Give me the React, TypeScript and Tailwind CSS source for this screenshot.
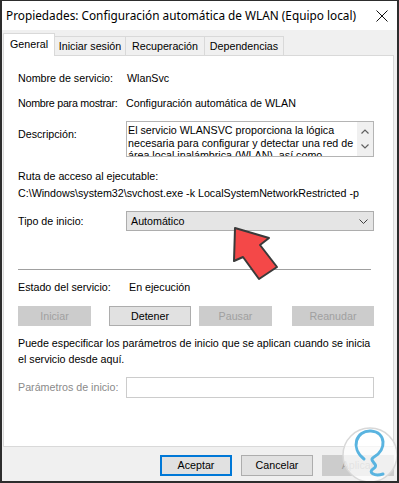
import React from "react";

function DisabledBtn({ label, w }: { label: string; w: string }) {
  return (
    <div className={`${w} h-[20px] bg-[#cccccc] border border-[#cccccc] text-[#a0a0a0] flex items-center justify-center`}>
      {label}
    </div>
  );
}

export default function App() {
  return (
    <div className="relative w-[399px] h-[483px] overflow-hidden border-x-2 border-b-2 border-t border-[#2d2d2d] bg-[#f0f0f0] font-['Liberation_Sans',Arial,sans-serif] text-[10.7px] text-black flex flex-col">
      {/* Title bar */}
      <div className="h-[29px] shrink-0 bg-white flex items-center justify-between pl-[4px] pr-[9px]">
        <span className="font-['Noto_Sans',sans-serif] text-[11.8px] leading-none text-black">
          Propiedades: Configuración automática de WLAN (Equipo local)
        </span>
        <svg width="12" height="12" viewBox="0 0 12 12">
          <path d="M0.5 0.5 L11.5 11.5 M11.5 0.5 L0.5 11.5" stroke="#111" strokeWidth="1" />
        </svg>
      </div>

      {/* Tabs */}
      <div className="h-[25px] shrink-0 flex items-end pl-px">
        <div className="relative z-10 h-[23px] w-[52px] -mb-px bg-white border border-b-0 border-[#d9d9d9] flex items-center justify-center pb-[2px]">
          General
        </div>
        <div className="h-[19px] w-[71px] border-t border-r border-[#d9d9d9] flex items-center justify-center">
          Iniciar sesión
        </div>
        <div className="h-[19px] w-[79px] border-t border-r border-[#d9d9d9] flex items-center justify-center">
          Recuperación
        </div>
        <div className="h-[19px] w-[79px] border-t border-r border-[#d9d9d9] flex items-center justify-center">
          Dependencias
        </div>
      </div>

      {/* Panel */}
      <div className="ml-px w-[391px] h-[392px] shrink-0 bg-white border border-[#d9d9d9] flex flex-col pl-[14px]">
        <div className="mt-[14px] h-[16px] flex items-center">
          <span className="w-[108px]">Nombre de servicio:</span>
          <span className="pl-px">WlanSvc</span>
        </div>
        <div className="mt-[9px] h-[16px] flex items-center">
          <span className="w-[108px] tracking-[-0.25px]">Nombre para mostrar:</span>
          <span>Configuración automática de WLAN</span>
        </div>
        <div className="mt-[10px] flex">
          <span className="w-[108px] pt-[5px] leading-[16px]">Descripción:</span>
          <div className="w-[248px] h-[36px] border border-[#b4b4b4] flex">
            <div className="flex-1 overflow-hidden pl-px pt-[2px] leading-[12.5px]">
              El servicio WLANSVC proporciona la lógica necesaria para configurar y detectar una red de área local inalámbrica (WLAN), así como conectarse a ella.
            </div>
            <div className="w-[16px] bg-[#f0f0f0] flex flex-col items-center justify-around py-[2px]">
              <svg width="8" height="5" viewBox="0 0 8 5">
                <path d="M0.5 4.5 L4 1 L7.5 4.5" stroke="#606060" strokeWidth="1.2" fill="none" />
              </svg>
              <svg width="8" height="5" viewBox="0 0 8 5">
                <path d="M0.5 0.5 L4 4 L7.5 0.5" stroke="#606060" strokeWidth="1.2" fill="none" />
              </svg>
            </div>
          </div>
        </div>
        <div className="mt-[11px] h-[16px] flex items-center">Ruta de acceso al ejecutable:</div>
        <div className="mt-[1px] h-[16px] flex items-center">
          C:\Windows\system32\svchost.exe -k LocalSystemNetworkRestricted -p
        </div>
        <div className="mt-[10px] h-[20px] flex items-center">
          <span className="w-[108px]">Tipo de inicio:</span>
          <div className="w-[248px] h-[20px] bg-[#e5e5e5] border border-[#adadad] flex items-center justify-between pl-[4px] pr-[5px]">
            <span>Automático</span>
            <svg width="9" height="5" viewBox="0 0 9 5">
              <path d="M0.5 0.5 L4.5 4.5 L8.5 0.5" stroke="#404040" strokeWidth="1" fill="none" />
            </svg>
          </div>
        </div>
        <div className="mt-[38px] h-px w-[353px] bg-[#a0a0a0]" />
        <div className="mt-[9px] h-[16px] flex items-center">
          <span className="w-[111px]">Estado del servicio:</span>
          <span>En ejecución</span>
        </div>
        <div className="mt-[11px] h-[20px] flex">
          <DisabledBtn label="Iniciar" w="w-[73px]" />
          <div className="ml-[18px] w-[82px] h-[20px] bg-[#e1e1e1] border border-[#adadad] flex items-center justify-center">
            Detener
          </div>
          <div className="ml-[8px]">
            <DisabledBtn label="Pausar" w="w-[73px]" />
          </div>
          <div className="ml-[20px]">
            <DisabledBtn label="Reanudar" w="w-[82px]" />
          </div>
        </div>
        <div className="mt-[10px] leading-[15.5px] w-[356px]">
          Puede especificar los parámetros de inicio que se aplican cuando se inicia el servicio desde aquí.
        </div>
        <div className="mt-[10px] h-[21px] flex items-center">
          <span className="w-[108px] text-[#8a8a8a]">Parámetros de inicio:</span>
          <div className="w-[248px] h-[21px] bg-white border border-[#cccccc]" />
        </div>
      </div>

      {/* Bottom buttons */}
      <div className="mt-[8px] h-[21px] flex justify-end gap-[9px] pr-[3px]">
        <div className="w-[72px] h-[21px] bg-[#e1e1e1] border-2 border-[#0078d7] flex items-center justify-center">
          Aceptar
        </div>
        <div className="w-[72px] h-[21px] bg-[#e1e1e1] border border-[#adadad] flex items-center justify-center">
          Cancelar
        </div>
        <div className="w-[72px] h-[21px] bg-[#cccccc] border border-[#cccccc] text-[#a0a0a0] flex items-center justify-center">
          Aplicar
        </div>
      </div>

      {/* Overlays: arrow and watermark */}
      <svg
        className="absolute left-[-2px] top-[-1px] pointer-events-none"
        width="399"
        height="483"
        viewBox="0 0 399 483"
      >
        <path
          d="M235 228 L269 238 L260 245 L277 267 L259 279 L243 257 L234 261 Z"
          fill="#f44848"
          stroke="#3a3a3a"
          strokeWidth="2"
          strokeLinejoin="round"
        />
        <circle cx="370" cy="455" r="27" fill="#ffffff" fillOpacity="0.7" stroke="#d8d8d8" strokeWidth="1.5" />
        <path
          d="M364 459 C350 448 356 430 371 431 C386 432 387 450 374 457 C367 461 381 464 373 469 C368 472 374 477 383 474"
          fill="none"
          stroke="#5ab4e0"
          strokeWidth="3"
          strokeLinecap="round"
          strokeLinejoin="round"
        />
      </svg>
    </div>
  );
}
